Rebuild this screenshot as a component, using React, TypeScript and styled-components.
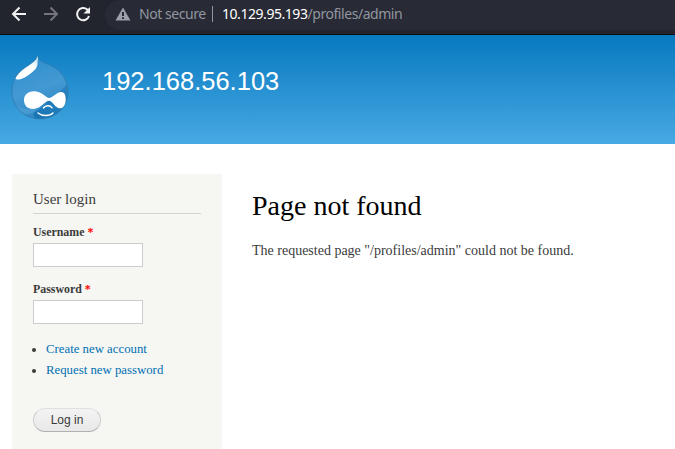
import React from "react";
import styled, { createGlobalStyle } from "styled-components";

const GlobalStyle = createGlobalStyle`
  *, *::before, *::after { box-sizing: border-box; }
  html, body { margin: 0; background: #fff; overflow: hidden; }
  body { font: 14px/21px "Liberation Serif", serif; color: #3b3b3b; }
  h1, h2, p, ul { margin: 0; padding: 0; font-weight: normal; }
`;

const Page = styled.div`
  width: 675px;
  height: 449px;
  overflow: hidden;
`;

const BrowserBar = styled.nav`
  display: flex;
  height: 35px;
  background: #23252e;
  border-bottom: 1px solid #0b0c10;
`;

const NavButtons = styled.div`
  display: flex;
  gap: 16px;
  padding: 6px 0 0 11px;
  width: 105px;
  flex: none;
`;

const NavIcon = styled.svg<{ $dim?: boolean }>`
  width: 16px;
  height: 16px;
  flex: none;
  fill: none;
  stroke: ${(p) => (p.$dim ? "#73757b" : "#f1f1f1")};
  stroke-width: 2;
`;

const AddressBar = styled.div`
  display: flex;
  align-items: center;
  flex: 1;
  height: 30px;
  padding: 0 0 2px 10px;
  background: #282a35;
  border-radius: 15px 0 0 15px;
  font: 14px/20px "Noto Sans", sans-serif;
  letter-spacing: -0.45px;
  color: #9297a0;
  white-space: nowrap;
`;

const WarningIcon = styled.svg`
  width: 16px;
  height: 14px;
  margin-right: 8px;
`;

const SecurityLabel = styled.span`
  width: 73px;
`;

const Divider = styled.span`
  width: 1px;
  height: 16px;
  margin-right: 9px;
  background: #92959d;
`;

const Host = styled.span`
  color: #fff;
`;

const SiteHeader = styled.header`
  display: flex;
  height: 109px;
  padding: 20px 0 0 11px;
  background: linear-gradient(#0779bf, #48a9e4);
`;

const Logo = styled.svg`
  width: 58px;
  height: 65px;
`;

const SiteName = styled.div`
  margin: 11px 0 0 33px;
  font: 25.5px/30px "Liberation Sans", sans-serif;
  color: #fff;
`;

const Columns = styled.div`
  display: flex;
  gap: 30px;
  padding: 30px 0 0 12px;
`;

const Sidebar = styled.aside`
  width: 210px;
  height: 275px;
  padding: 15px 21px 0;
  background: #f6f6f2;
`;

const BlockTitle = styled.h2`
  height: 25px;
  margin-bottom: 8px;
  border-bottom: 1px solid #d3d4d4;
  font-size: 15px;
  line-height: 21px;
`;

const Field = styled.label`
  display: block;
  height: 57px;
  font-size: 11.89px;
  line-height: 21px;
  font-weight: bold;
`;

const Required = styled.span`
  color: #f00;
`;

const TextInput = styled.input`
  display: block;
  width: 110px;
  height: 24px;
  margin: 0;
  border: 1px solid #ccc;
  background: #fff;
`;

const Links = styled.ul`
  padding: 3px 0 0 13px;
  font-size: 12.8px;
  line-height: 21px;
`;

const LinkItem = styled.li`
  list-style: none;
  display: flex;
  align-items: center;
  margin-left: -14px;

  &::before {
    content: "";
    width: 4px;
    height: 4px;
    margin: 0 10px 0 0;
    border-radius: 50%;
    background: #3b3b3b;
  }
`;

const Link = styled.a`
  color: #0071b3;
  text-decoration: none;
`;

const LoginButton = styled.button`
  display: block;
  width: 68px;
  height: 24px;
  margin-top: 27px;
  padding: 0;
  border: 1px solid #ccc;
  border-top-color: #e0e0e0;
  border-bottom-color: #b0b0b0;
  border-radius: 12px;
  background: linear-gradient(#f3f3f3, #e8e8e8);
  font: 12px/20px "Liberation Sans", sans-serif;
  color: #3a3a3a;
`;

const Content = styled.main`
  padding-top: 14px;
`;

const PageTitle = styled.h1`
  font-size: 28px;
  line-height: 36px;
  color: #000;
`;

const Message = styled.p`
  margin-top: 16px;
`;

const DROP_PATH =
  "M26.500 .500C27.300 3 28 5 30.500 6.500C33 8 37 9 40 10.600C51 16 57 26 57 36.500C57 52 45 63.800 29 63.800C13 63.800 1 52 1 37C1 28.500 3.500 22 8.500 17C12 13.500 17 10.800 21 7.800C24 5.500 26 3.500 26.500 .500Z";

const DrupalLogo = () => (
  <Logo viewBox="0 0 58 65">
    <defs>
      <linearGradient id="drop" x1="0.2" y1="0.1" x2="0.5" y2="1">
        <stop offset="0" stopColor="#2f8fcd" />
        <stop offset="0.5" stopColor="#4399d2" />
        <stop offset="1" stopColor="#2f88c4" />
      </linearGradient>
      <linearGradient id="shade" x1="0.9" y1="0" x2="0.2" y2="1">
        <stop offset="0" stopColor="#2d86c2" />
        <stop offset="1" stopColor="#1873b3" />
      </linearGradient>
      <linearGradient id="gloss" x1="0.9" y1="0" x2="0.1" y2="1">
        <stop offset="0" stopColor="#c3dff1" />
        <stop offset="0.35" stopColor="#fff" />
        <stop offset="1" stopColor="#fff" />
      </linearGradient>
      <clipPath id="dropShape"><path d={DROP_PATH} /></clipPath>
    </defs>
    <g clipPath="url(#dropShape)">
      <path fill="url(#drop)" d="M0 0H58V65H0Z" />
      <path fill="url(#shade)" d="M58 25C54 34 48 37 41 42L30 53C25 57 20 59 14 59L18 65H58V25Z" />
      <path fill="#58a8dc" opacity=".45" d="M0 47C9 55 19 56 28 51C22 57 20 61 27 65H15C7 61 2 55 0 47Z" />
    </g>
    <path fill="none" stroke="#2f78a6" strokeOpacity=".7" d={DROP_PATH} />
    <path fill="url(#gloss)" d="M26.500 1C26 4 24 6 21 8.300C17 11.300 12.500 13.800 9 17.300C7 19.300 5.500 21.300 4.500 23.500C5 24.900 7.500 24.800 10 24C15 22.300 20.500 18.500 24.300 14.200C26.500 11.500 26.800 9.500 26.500 6.500C27 4.500 27.300 3 26.500 1Z" />
    <path fill="#fff" d="M23 36.300C30.500 36.300 35 43 38.300 43C41.500 43 45.500 37 50 37C53.500 37 54.700 40 54.700 44.500C54.700 50 52 53.300 49 53.300C44 53.300 41.500 45.800 38 45.800C34 45.800 30 54 22 54C16 54 13 50 13 45C13 40 17 36.300 23 36.300Z" />
    <path fill="none" stroke="#fff" strokeWidth="1.5" strokeLinecap="round" d="M32.500 53C34.500 50.200 39 50 41 52.700M27 58C31 61.300 38.500 61.500 42 58" />
  </Logo>
);

export default function App() {
  return (
    <Page>
      <GlobalStyle />
      <BrowserBar>
        <NavButtons>
          <NavIcon viewBox="0 0 16 16"><path d="M15 8H2.500M8.500 1.500L2 8L8.500 14.500" /></NavIcon>
          <NavIcon viewBox="0 0 16 16" $dim><path d="M1 8H13.500M7.500 1.500L14 8L7.500 14.500" /></NavIcon>
          <NavIcon viewBox="0 0 16 16">
            <path d="M14 10A6.100 6.100 0 1 1 12.200 3.500L14 5.500" />
            <path d="M15 1V7.500H8.500Z" fill="#f1f1f1" stroke="none" />
          </NavIcon>
        </NavButtons>
        <AddressBar>
          <WarningIcon viewBox="0 0 16 14">
            <path d="M8 .5L15.500 13.500H.5Z" fill="#9da0a8" />
            <path d="M7 5H9V9H7ZM7 10.300H9V12H7Z" fill="#282a35" />
          </WarningIcon>
          <SecurityLabel>Not secure</SecurityLabel>
          <Divider />
          <Host>10.129.95.193</Host>/profiles/admin
        </AddressBar>
      </BrowserBar>
      <SiteHeader>
        <DrupalLogo />
        <SiteName>192.168.56.103</SiteName>
      </SiteHeader>
      <Columns>
        <Sidebar>
          <BlockTitle>User login</BlockTitle>
          <Field>Username <Required>*</Required><TextInput type="text" /></Field>
          <Field>Password <Required>*</Required><TextInput type="password" /></Field>
          <Links>
            <LinkItem><Link>Create new account</Link></LinkItem>
            <LinkItem><Link>Request new password</Link></LinkItem>
          </Links>
          <LoginButton>Log in</LoginButton>
        </Sidebar>
        <Content>
          <PageTitle>Page not found</PageTitle>
          <Message>The requested page "/profiles/admin" could not be found.</Message>
        </Content>
      </Columns>
    </Page>
  );
}
